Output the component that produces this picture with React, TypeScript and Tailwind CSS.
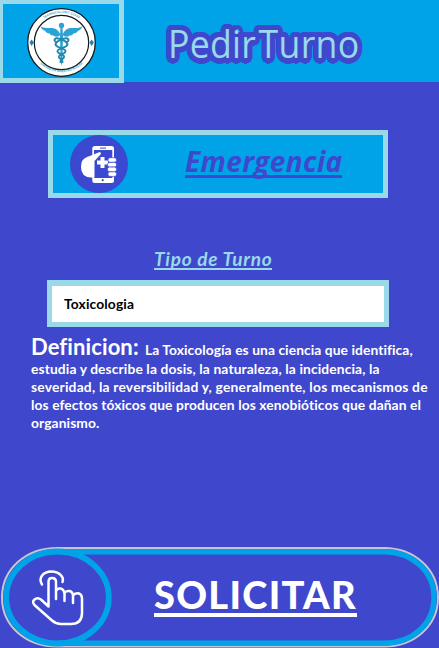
import type { ReactNode } from "react";

function Caduceus() {
  return (
    <svg viewBox="0 0 116 74" className="block h-[74px] w-[116px]">
      <circle cx="58.5" cy="38.5" r="33.800" fill="#fff" stroke="#15191c" strokeWidth="1.3" />
      <circle cx="58.5" cy="38.5" r="27.2" fill="#fff" stroke="#15191c" strokeWidth="1.2" />
      <path id="ringTop" d="M31 27A30 30 0 0 1 86 27" fill="none" />
      <path id="ringBottom" d="M31 52A31.5 31.5 0 0 0 86 52" fill="none" />
      <g fill="#36a5cf" fontFamily="Liberation Sans, sans-serif" fontSize="3.2">
        <text><textPath href="#ringTop" startOffset="50%" textAnchor="middle">TECHNICAL UNIT STAFF</textPath></text>
        <text><textPath href="#ringBottom" startOffset="50%" textAnchor="middle">UNIDOS EN NUESTRO HOGAR</textPath></text>
      </g>
      <path d="M26.5 38.5L28.5 35.5L31 38.5L28.5 42zM86.5 38.5L88.5 35.5L91 38.5L88.5 42z" fill="#1688b4" />
      <g fill="#2ba3d4">
        <circle cx="58.5" cy="21.5" r="2.700" />
        <path d="M57.500 23h2l.5 10-.7 25-.8 4-.8-4-.7-25z" />
        <path d="M57.500 31C55.500 25 51 23.500 46 24C42 24.300 39.500 23.500 37.500 22.300C38.500 25 40 26.300 42 26.800C43 28.700 44.500 29.300 46.500 29.500C47.500 31.300 49 31.700 50.500 31.500C52.500 33.500 55.500 32.800 57.500 31zM59.500 31C61.500 25 66 23.500 71 24C75 24.300 77.500 23.500 79.500 22.300C78.500 25 77 26.300 75 26.800C74 28.700 72.500 29.300 70.500 29.500C69.500 31.300 68 31.700 66.500 31.500C64.500 33.500 61.500 32.800 59.500 31z" />
      </g>
      <g fill="none" stroke="#2388b0" strokeWidth="2" strokeLinecap="round">
        <path d="M54 38C50 37.500 51 33.500 55.500 34.500C60 35.500 66 38.500 64 41.500C62 44.500 54 44 54.500 47.500C55 50.500 61.500 50 61 53C60.500 55.500 57 55 57.500 58" />
        <path d="M63 38C67 37.500 66 33.500 61.500 34.500C57 35.500 51 38.500 53 41.500C55 44.500 63 44 62.500 47.500C62 50.500 55.500 50 56 53C56.500 55.500 60 55 59.500 58" />
      </g>
    </svg>
  );
}

function PhoneInHand() {
  return (
    <svg viewBox="0 0 58 58" className="ml-[17px] block size-[58px] shrink-0">
      <circle cx="29" cy="29" r="29" fill="#3b48d0" />
      <rect x="22.300" y="11" width="21.700" height="37" rx="2.500" fill="#fff" />
      <path d="M24 15h18.300v28H24z" fill="#3b48d0" />
      <path d="M30 13.100h6" stroke="#3b48d0" strokeWidth="1" />
      <circle cx="32.700" cy="45.200" r="1.100" fill="#3b48d0" />
      <path d="M22.500 20L29 17.200Q32 16.800 30.500 19.500L24.500 26V42.500H21Q11 42 11 32Q11 24 17 22z" fill="#fff" />
      <path d="M32.500 22v11M27 27.500h11" stroke="#fff" strokeWidth="4" />
      <g fill="#fff" stroke="#3b48d0" strokeWidth=".7">
        <rect x="38" y="22.700" width="8.500" height="4.600" rx="2" />
        <rect x="37.500" y="27.400" width="9" height="4.600" rx="2" />
        <rect x="37.500" y="32.100" width="9" height="4.600" rx="2" />
        <rect x="38" y="36.800" width="8.500" height="4.600" rx="2" />
      </g>
    </svg>
  );
}

function PillFrame() {
  return (
    <svg viewBox="0 0 439 101" className="absolute inset-0 h-[101px] w-[439px]">
      <path d="M57 1H384C414 1 438 22 438 50.500S414 99.500 384 99.500H57C26 99.500 2 79 2 50.500S26 1 57 1z" fill="none" stroke="#c9c5d2" strokeWidth="2" />
      <path d="M58 4.700H384C412 4.700 434 24 434 50.500S412 96.300 384 96.300H58" fill="none" stroke="#00a2e8" strokeWidth="5.400" />
      <ellipse cx="57.500" cy="50.500" rx="51.300" ry="46" fill="none" stroke="#00a2e8" strokeWidth="5.800" />
      <g fill="none" stroke="#fff" strokeWidth="2.500" strokeLinecap="round" strokeLinejoin="round">
        <path d="M42 37.500C38 31 43 24.500 51.500 24.500C59 24.500 64.500 30 62.500 35" />
        <path d="M48.500 59.500V35Q48.500 31 52 31Q56 31 56 35V52M56 44Q57 41 60.500 41.500Q64 42 64.500 47V54M64.500 46Q66 43.500 69.500 44Q73 45 73 49V56M73 48.500Q75 45.500 79 46.500Q82 47.500 82 52V66Q82 77 71 77H61Q56 77 52 73.500L35 58.500Q31.500 55 34.500 52.500Q37.500 50 41 52.500L48.500 59.500" />
      </g>
    </svg>
  );
}

function Line({ className, children }: { className: string; children: ReactNode }) {
  return <p className={className}>{children}</p>;
}

export default function App() {
  return (
    <main className="flex h-[648px] w-[439px] flex-col overflow-hidden bg-[#3f48cc] font-['Lato',sans-serif] font-bold [font-variant-ligatures:none]">
      <header className="flex h-[82px] shrink-0 bg-[#00a2e8]">
        <div className="h-[83px] w-[124px] shrink-0 border-t-4 border-r-5 border-b-5 border-l-3 border-[#99d9ea] bg-[#00a2e8]">
          <Caduceus />
        </div>
        <h1 className="mt-[19px] ml-[44px] h-[50px] origin-left scale-x-[0.95] font-['Open_Sans',sans-serif] text-[37.5px] leading-[50px] font-medium tracking-[0.3px] whitespace-nowrap text-[#99d9ea] [word-spacing:-7.5px] [text-shadow:5.5px_0_#3f48cc,5px_2.1px_#3f48cc,3.9px_3.9px_#3f48cc,2.1px_5px_#3f48cc,0_5.5px_#3f48cc,-2.1px_5px_#3f48cc,-3.9px_3.9px_#3f48cc,-5px_2.1px_#3f48cc,-5.5px_0_#3f48cc,-5px_-2.1px_#3f48cc,-3.9px_-3.9px_#3f48cc,-2.1px_-5px_#3f48cc,0_-5.5px_#3f48cc,2.1px_-5px_#3f48cc,3.9px_-3.9px_#3f48cc,5px_-2.1px_#3f48cc,2px_2px_#3f48cc,-2px_-2px_#3f48cc]">
          Pedir Turno
        </h1>
      </header>

      <button className="mt-[48px] ml-[48px] flex h-[68px] w-[340px] shrink-0 items-start border-5 border-[#99d9ea] bg-[#00a2e8] text-left">
        <PhoneInHand />
        <span className="mt-[8px] ml-[57px] h-[35px] w-[157px] border-b-3 border-[#3f48cc] font-['Open_Sans',sans-serif] text-[28px] leading-[36px] tracking-[0.35px] whitespace-nowrap text-[#3f48cc] italic">
          Emergencia
        </span>
      </button>

      <h2 className="mt-[48px] ml-[154px] h-[24px] w-[118px] shrink-0 border-b-2 border-[#99d9ea] text-[19px] leading-[25px] tracking-[0.72px] whitespace-nowrap text-[#99d9ea] italic">
        Tipo de Turno
      </h2>

      <div className="mt-[10px] ml-[47px] flex h-[47px] w-[342px] shrink-0 items-center border-x-5 border-t-6 border-b-5 border-[#99d9ea] bg-white pt-px pl-[12px] text-[13.8px] tracking-[0.15px] text-black">
        Toxicologia
      </div>

      <section className="mt-[7px] ml-[31px] shrink-0 text-[13.8px] leading-[18px] whitespace-nowrap text-white">
        <p className="flex h-[26px] items-baseline">
          <span className="w-[114px] text-[22px] leading-[26px] tracking-[0.1px]">Definicion:</span>
          <span className="tracking-[0.08px]">La Toxicología es una ciencia que identifica,</span>
        </p>
        <Line className="tracking-[0.12px]">estudia y describe la dosis, la naturaleza, la incidencia, la</Line>
        <Line className="tracking-[0.21px]">severidad, la reversibilidad y, generalmente, los mecanismos de</Line>
        <Line className="tracking-[0.09px]">los efectos tóxicos que producen los xenobióticos que dañan el</Line>
        <Line className="tracking-[0.1px]">organismo.</Line>
      </section>

      <button className="relative mt-auto flex h-[101px] w-[439px] shrink-0 pl-[154px] text-left text-white">
        <PillFrame />
        <span className="mt-[27px] h-[43px] w-[203px] border-b-4 border-white text-[38px] leading-[41px] font-black tracking-[1.3px] whitespace-nowrap">
          SOLICITAR
        </span>
      </button>
    </main>
  );
}
